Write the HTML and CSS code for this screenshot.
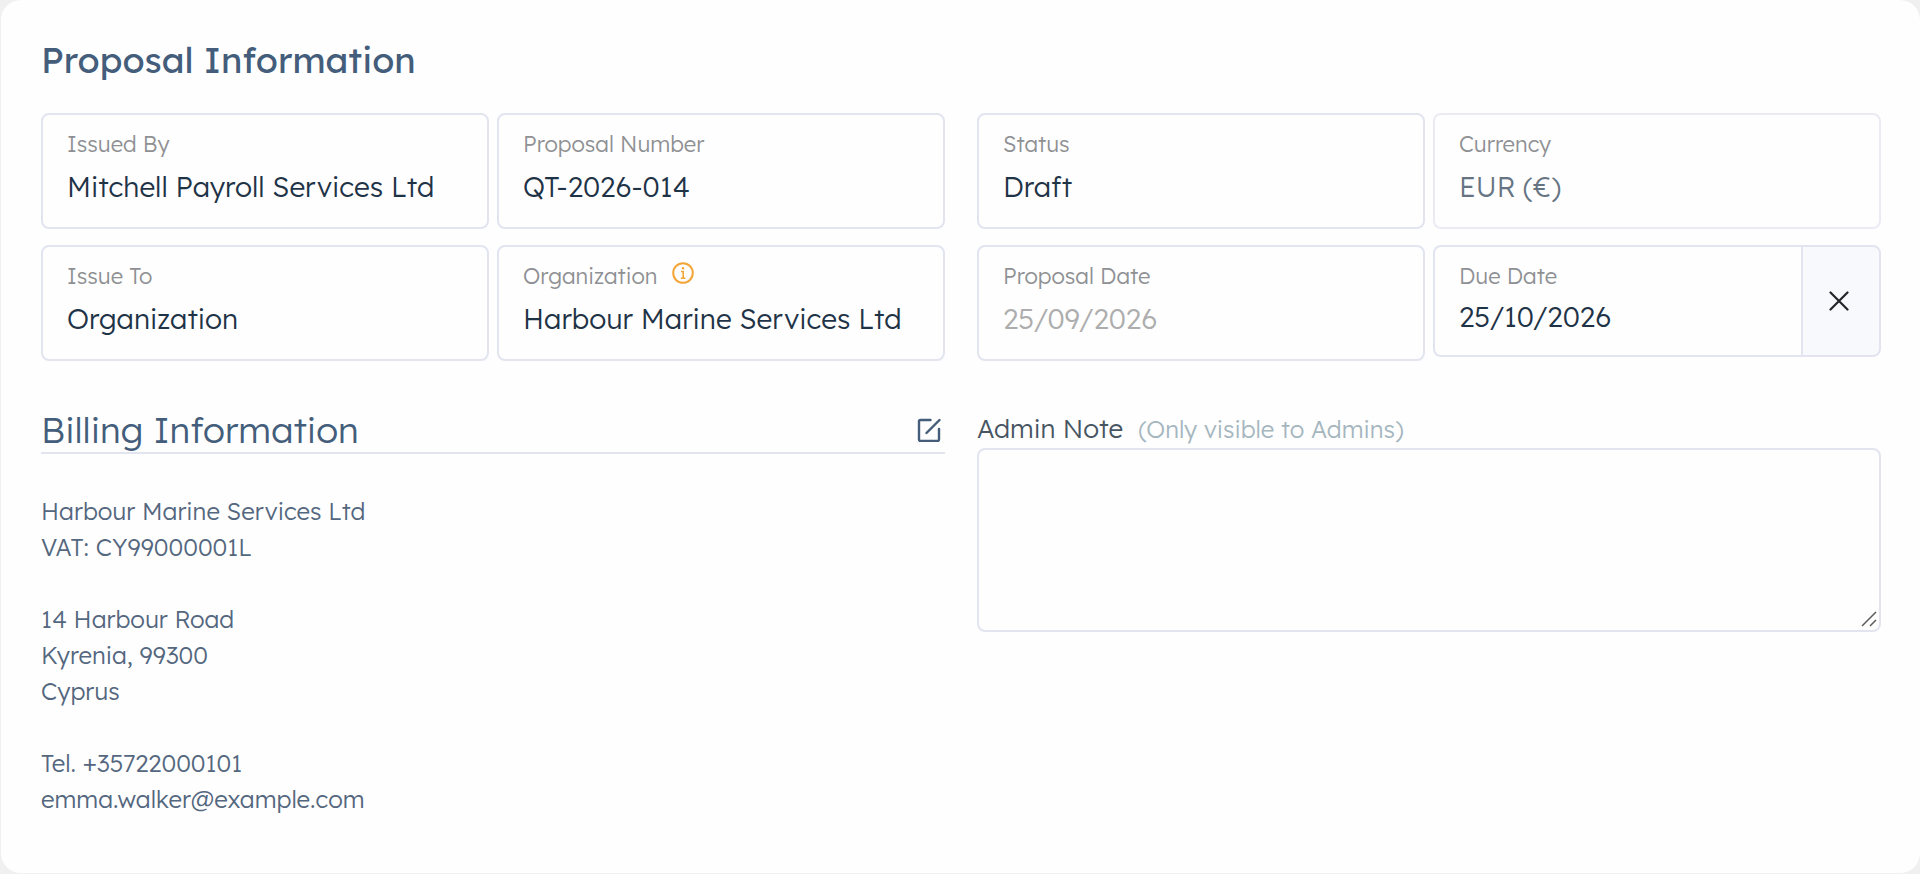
FILE: index.html
```html
<!DOCTYPE html>
<html lang="en">
<head>
  <meta charset="UTF-8">
  <meta name="viewport" content="width=device-width, initial-scale=1.0">
  <title>Proposal Information</title>
  <link rel="stylesheet" href="styles.css">
</head>
<body>

  <form class="card">
    <h1 class="title">Proposal Information</h1>

    <div class="columns">
      <div class="fields">
        <div class="field">
          <label for="issuedBy">Issued By</label>
          <select id="issuedBy"><option>Mitchell Payroll Services Ltd</option></select>
        </div>
        <div class="field">
          <label for="number">Proposal Number</label>
          <input type="text" id="number" value="QT-2026-014">
        </div>
        <div class="field">
          <label for="issueTo">Issue To</label>
          <select id="issueTo"><option>Organization</option></select>
        </div>
        <div class="field">
          <div class="label-row">
            <label for="organization">Organization</label>
            <svg class="info-icon" viewBox="0 0 22 22" fill="none" stroke="currentColor" stroke-width="2">
              <circle cx="11" cy="11" r="9.8"/>
              <path d="M9 9.500h2.200v7M8.800 16.300h4.600" stroke-width="1.600"/>
              <circle cx="11" cy="6.300" r="1.200" fill="currentColor" stroke="none"/>
            </svg>
          </div>
          <select id="organization"><option>Harbour Marine Services Ltd</option></select>
        </div>
      </div>

      <div class="fields">
        <div class="field">
          <label for="status">Status</label>
          <select id="status"><option>Draft</option></select>
        </div>
        <div class="field disabled">
          <label for="currency">Currency</label>
          <select id="currency" disabled><option>EUR (€)</option></select>
        </div>
        <div class="field">
          <label for="proposalDate">Proposal Date</label>
          <input type="text" id="proposalDate" placeholder="25/09/2026">
        </div>
        <div class="date-group">
          <div class="field">
            <label for="dueDate">Due Date</label>
            <input type="text" id="dueDate" value="25/10/2026">
          </div>
          <button type="button" class="clear-btn" aria-label="Clear due date">
            <svg viewBox="0 0 20 20" fill="none" stroke="currentColor" stroke-width="2.200" stroke-linecap="round">
              <path d="M1.500 1.500l17 17M18.500 1.500l-17 17"/>
            </svg>
          </button>
        </div>
      </div>
    </div>

    <div class="columns">
      <section class="billing">
        <div class="billing-head">
          <h2>Billing Information</h2>
          <button type="button" class="edit-btn" aria-label="Edit billing information">
            <svg viewBox="0 0 24 24" fill="none" stroke="currentColor" stroke-width="2.400" stroke-linecap="round" stroke-linejoin="round">
              <path d="M13.500 2H3.500A1.500 1.500 0 0 0 2 3.500v18A1.500 1.500 0 0 0 3.500 23h17a1.500 1.500 0 0 0 1.500-1.500V11"/>
              <path d="M9.500 15L22.500 2"/>
            </svg>
          </button>
        </div>
        <address>
          Harbour Marine Services Ltd<br>
          VAT: CY99000001L<br>
          <br>
          14 Harbour Road<br>
          Kyrenia, 99300<br>
          Cyprus<br>
          <br>
          Tel. +35722000101<br>
          emma.walker@example.com
        </address>
      </section>

      <section class="note">
        <label for="adminNote">Admin Note <span class="hint">(Only visible to Admins)</span></label>
        <div class="note-box">
          <textarea id="adminNote"></textarea>
          <svg class="grip" viewBox="0 0 16 16" fill="none" stroke="currentColor" stroke-width="1.500">
            <path d="M1 15L15 1M9 15l6-6"/>
          </svg>
        </div>
      </section>
    </div>
  </form>

</body>
</html>
```
FILE: styles.css
```css
* {
  box-sizing: border-box;
}

body {
  margin: 0;
  padding: 0 0 1px 1px;
  background: #f0f0f1;
  font-family: Lexend, Inter, sans-serif;
  font-weight: 300;
  color: #1f3347;
}

.card {
  background: #fefefe;
  border-radius: 20px;
  padding: 36px 39px 56px 40px;
}

.title {
  margin: 0 0 29px;
  font-size: 36px;
  line-height: 48px;
  font-weight: 400;
  color: #435d7b;
}

/* two halves of the form */
.columns {
  display: grid;
  grid-template-columns: 1fr 1fr;
  gap: 32px;
}

.fields {
  display: grid;
  grid-template-columns: 1fr 1fr;
  gap: 16px 8px;
  align-items: start;
}

.field {
  display: flex;
  flex-direction: column;
  gap: 11px;
  min-width: 0;
  padding: 15px 24px 22px;
  border: 2px solid #e2e5f0;
  border-radius: 8px;
}

.field label {
  font-size: 22px;
  line-height: 28px;
  color: #8e9093;
}

.field input,
.field select {
  appearance: none;
  width: 100%;
  height: 36px;
  margin: 0;
  padding: 0;
  border: none;
  outline: none;
  background: transparent;
  font-family: inherit;
  font-size: 28px;
  font-weight: inherit;
  line-height: 36px;
  color: #1f3347;
}

.field input::placeholder {
  color: #adadad;
  opacity: 1;
}

.field.disabled {
  border-color: #ebebf3;
}

.field.disabled select {
  color: #667482;
  opacity: 1;
}

.label-row {
  display: flex;
  gap: 14px;
}

.info-icon {
  width: 22px;
  height: 22px;
  color: #f3a638;
}

/* date box with a clear button on its right */
.date-group {
  display: flex;
}

.date-group .field {
  flex: 1;
  gap: 9px;
  padding-bottom: 20px;
  border-right: none;
  border-radius: 8px 0 0 8px;
}

.clear-btn {
  display: flex;
  align-items: center;
  justify-content: center;
  width: 80px;
  padding: 0 4px 0 0;
  border: 2px solid #e2e5f0;
  border-radius: 0 8px 8px 0;
  background: #f8f9fc;
  color: #222528;
  cursor: pointer;
}

.clear-btn svg {
  width: 20px;
  height: 20px;
}

/* billing */
.billing {
  padding-top: 47px;
}

.billing-head {
  display: flex;
  align-items: center;
  justify-content: space-between;
  padding-right: 4px;
  border-bottom: 2px solid #e2e5f0;
}

.billing-head h2 {
  margin: 0;
  font-size: 36px;
  line-height: 44px;
  font-weight: 300;
  color: #435d7b;
}

.edit-btn {
  display: flex;
  padding: 0;
  border: none;
  background: none;
  color: #435d7b;
  cursor: pointer;
}

.edit-btn svg {
  width: 24px;
  height: 24px;
}

.billing address {
  margin-top: 39px;
  font-style: normal;
  font-size: 24px;
  line-height: 36px;
  color: #54677e;
}

/* admin note */
.note {
  display: flex;
  flex-direction: column;
  padding-top: 50px;
}

.note label {
  margin-bottom: 1px;
  font-size: 26px;
  line-height: 36px;
  color: #475563;
}

.note .hint {
  margin-left: 8px;
  font-size: 24px;
  color: #a5b6bf;
}

.note-box {
  position: relative;
}

.note textarea {
  display: block;
  width: 100%;
  height: 184px;
  padding: 16px 24px;
  border: 2px solid #e2e5f0;
  border-radius: 8px;
  outline: none;
  background: transparent;
  font-family: inherit;
  font-size: 28px;
  font-weight: inherit;
  color: #1f3347;
  resize: vertical;
}

.note textarea::-webkit-resizer {
  background: transparent;
}

.grip {
  position: absolute;
  right: 4px;
  bottom: 5px;
  width: 16px;
  height: 16px;
  color: #5b5b5b;
  pointer-events: none;
}
```
